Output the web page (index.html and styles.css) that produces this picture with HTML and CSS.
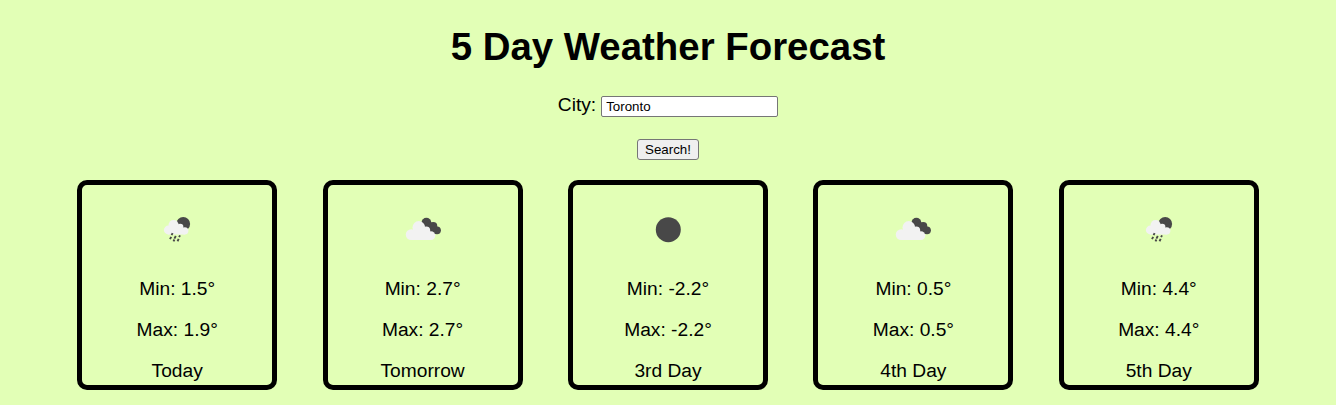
FILE: index.html
```html
<!DOCTYPE html>
<html lang="en">
<head>
<meta charset="utf-8">
<title>5 Day Weather Forecast</title>
<link rel="stylesheet" href="styles.css">
</head>
<body>
<svg class="defs" aria-hidden="true">
  <symbol id="rain" viewBox="0 0 50 50">
    <circle cx="31.2" cy="18.9" r="6.9" fill="#484848"/>
    <g fill="#f2f2f2">
      <circle cx="16.3" cy="25" r="4.4"/>
      <circle cx="21.6" cy="20" r="5.1"/>
      <circle cx="28.2" cy="22" r="3.2"/>
      <circle cx="32.8" cy="25.8" r="3.6"/>
      <path d="M16 22h12l5 4v3.4H16z"/>
    </g>
    <path d="M20.6 28.1l-1 2M19.2 31.8l-1.2 2.4M23.8 31l-1.4 2.6M28 30.4l-.9 1.7M22.4 34.5l-.9 1.9M26.7 33.9l-1.2 2.3" stroke="#484848" stroke-width="1.9"/>
  </symbol>
  <symbol id="cloud" viewBox="0 0 50 50">
    <g fill="#484848">
      <circle cx="28.4" cy="17.7" r="4.9"/>
      <circle cx="35.2" cy="21.2" r="4.1"/>
      <circle cx="39" cy="25.3" r="3.9"/>
      <path d="M28 17l7 1 4 11.1h-6z"/>
    </g>
    <g fill="#f2f2f2">
      <circle cx="13.2" cy="29.6" r="5.4"/>
      <circle cx="20.8" cy="22.4" r="6.3"/>
      <circle cx="28.2" cy="25.6" r="4"/>
      <circle cx="32.9" cy="30.6" r="4.4"/>
      <path d="M13.2 26l7-5 8 3 4.7 4v7H13.2z"/>
    </g>
  </symbol>
  <symbol id="moon" viewBox="0 0 50 50"><circle cx="25.3" cy="24.7" r="12.5" fill="#484848"/></symbol>
</svg>
<h1 class="title">5 Day Weather Forecast</h1>
<form class="search">
  <label class="city">City: <input class="field" type="text" value="Toronto"></label>
  <button class="button" type="button">Search!</button>
</form>
<main class="days">
  <section class="card"><svg class="icon"><use href="#rain"/></svg><p>Min: 1.5°</p><p>Max: 1.9°</p><p>Today</p></section>
  <section class="card"><svg class="icon"><use href="#cloud"/></svg><p>Min: 2.7°</p><p>Max: 2.7°</p><p>Tomorrow</p></section>
  <section class="card"><svg class="icon"><use href="#moon"/></svg><p>Min: -2.2°</p><p>Max: -2.2°</p><p>3rd Day</p></section>
  <section class="card"><svg class="icon"><use href="#cloud"/></svg><p>Min: 0.5°</p><p>Max: 0.5°</p><p>4th Day</p></section>
  <section class="card"><svg class="icon"><use href="#rain"/></svg><p>Min: 4.4°</p><p>Max: 4.4°</p><p>5th Day</p></section>
</main>
</body>
</html>
```
FILE: styles.css
```css
* { box-sizing: border-box; }
body {
  margin: 0;
  background: #e2ffb6;
  color: #000;
  font: 19.2px/22px "Liberation Sans", Arial, sans-serif;
  text-align: center;
}
.defs { display: none; }
.title { margin: 0; padding-top: 25px; font-size: 38.4px; line-height: 44px; }
.search { display: flex; flex-direction: column; align-items: center; padding-top: 25px; }
.city { display: flex; gap: 5px; height: 45px; }
.field {
  width: 177px; height: 21px; margin-top: 2px; padding: 1px 3px 1px 4px;
  border: 1px solid #767676; border-radius: 2px; background: #fff;
  font: 13.333px "Liberation Sans", Arial, sans-serif;
}
.button {
  width: 62px; height: 21px; padding: 0;
  border: 1px solid #767676; border-radius: 3px; background: #efefef; color: #000;
  font: 13.333px "Liberation Sans", Arial, sans-serif;
}
.days { display: flex; justify-content: space-between; width: 1181.6px; margin: 20px auto 0; }
.card { width: 200px; height: 210px; padding-top: 20px; border: 5px solid #000; border-radius: 10px; }
.icon { display: block; width: 50px; height: 50px; margin: 0 auto 23px; }
.card p { margin: 0 0 19px; }
.card p:last-child { margin-bottom: 0; }
```
